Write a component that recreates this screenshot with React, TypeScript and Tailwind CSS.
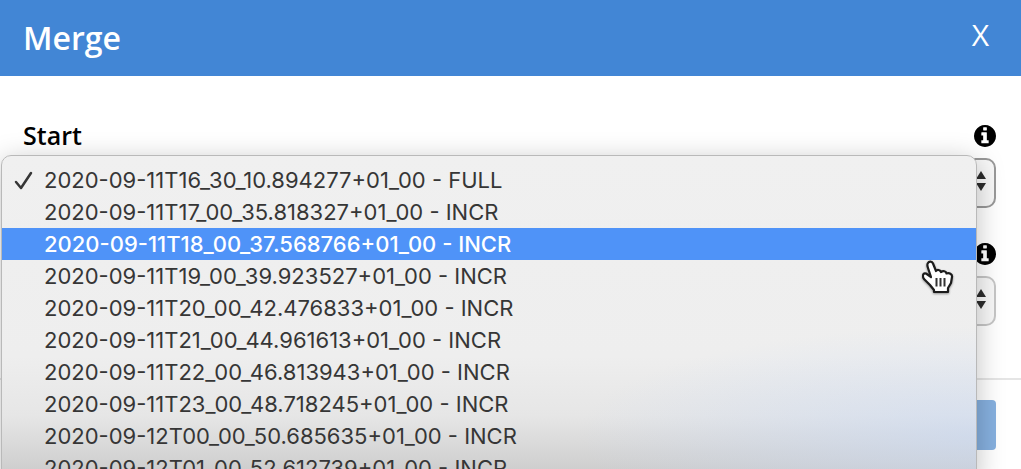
import { useState } from "react";

const backups = [
  "2020-09-11T16_30_10.894277+01_00 - FULL",
  "2020-09-11T17_00_35.818327+01_00 - INCR",
  "2020-09-11T18_00_37.568766+01_00 - INCR",
  "2020-09-11T19_00_39.923527+01_00 - INCR",
  "2020-09-11T20_00_42.476833+01_00 - INCR",
  "2020-09-11T21_00_44.961613+01_00 - INCR",
  "2020-09-11T22_00_46.813943+01_00 - INCR",
  "2020-09-11T23_00_48.718245+01_00 - INCR",
  "2020-09-12T00_00_50.685635+01_00 - INCR",
  "2020-09-12T01_00_52.612739+01_00 - INCR",
];

function SelectBox({ id, border }: { id: string; border: string }) {
  return (
    <div className="relative">
      <select
        id={id}
        aria-label={id}
        className={`block h-[50px] w-full appearance-none rounded-[10px] border-2 bg-[#f8f8f8] text-transparent ${border}`}
      >
        {backups.map((b) => (
          <option key={b}>{b}</option>
        ))}
      </select>
      <svg
        className="pointer-events-none absolute top-[13px] right-[10px] h-5 w-[10px]"
        viewBox="0 0 10 20"
        fill="#2c2c2c"
      >
        <path d="M5 0 10 8H0ZM5 20 0 12H10Z" />
      </svg>
    </div>
  );
}

function InfoButton() {
  return (
    <button type="button" aria-label="Information" className="text-black">
      <svg className="h-[22px] w-[22px]" viewBox="128 128 1536 1536" fill="currentColor">
        <path d="M1152 1376v-160q0-14-9-23t-23-9h-96v-512q0-14-9-23t-23-9h-320q-14 0-23 9t-9 23v160q0 14 9 23t23 9h96v320h-96q-14 0-23 9t-9 23v160q0 14 9 23t23 9h448q14 0 23-9t9-23zm-128-896v-160q0-14-9-23t-23-9h-192q-14 0-23 9t-9 23v160q0 14 9 23t23 9h192q14 0 23-9t9-23zm640 416q0 209-103 385.5t-279.5 279.5-385.5 103-385.5-103-279.5-279.5-103-385.5 103-385.5 279.5-279.5 385.5-103 385.5 103 279.5 279.5 103 385.5z" />
      </svg>
    </button>
  );
}

function HandCursor() {
  return (
    <svg
      className="pointer-events-none absolute top-[104px] right-[22px] h-[34px] w-8 drop-shadow-[0_1px_1px_rgba(0,0,0,0.4)]"
      viewBox="0 0 32 34"
    >
      <path
        d="M6 3C7 1 10 1 11 3.500L14 11C15 9.500 18 9.500 19 12C21 10.500 24 11 24.500 13.500C27 12.500 30.500 14 30 17L29 23L26 28V32H12V30L8 25L2 19C0 16 1 12.500 4 13.500L9 17L6 8C5 5 5 4 6 3Z"
        fill="#fff"
        stroke="#1c1c1c"
        strokeWidth="2.200"
        strokeLinejoin="round"
      />
      <path d="M14.500 18V26.500M18.500 18V26.500M22.500 18V26.500" stroke="#333" strokeWidth="2" />
    </svg>
  );
}

function BackupMenu() {
  const [active, setActive] = useState(2);
  return (
    <div
      role="listbox"
      aria-label="Start"
      className="absolute -top-[3px] right-[19px] -left-[22px] z-10 rounded-[10px] border border-[#b9b9b9] bg-[linear-gradient(to_bottom,#f0f0f0_0px,#eeeeee_200px,#e6e6e6_260px,#cecece_314px)] pt-2 shadow-[0_6px_28px_rgba(0,0,0,0.25)]"
    >
      <div className="pointer-events-none absolute inset-0 bg-[radial-gradient(ellipse_400px_110px_at_100%_280px,rgba(195,215,248,0.5),transparent)]" />
      {backups.map((b, i) => (
        <button
          key={b}
          type="button"
          role="option"
          aria-selected={i === 0}
          onMouseEnter={() => setActive(i)}
          className={`relative flex h-8 w-full items-center pl-3 text-left font-['Inter',sans-serif] text-[22px] whitespace-nowrap ${
            i === active ? "bg-[#4f93f8] font-medium text-white" : "text-[#363636]"
          }`}
        >
          <span className="w-[30px]">
            {i === 0 && (
              <svg className="h-5 w-5" viewBox="0 0 20 20" fill="none" stroke="#363636" strokeWidth="2.500">
                <path d="m2 12 5 6L17 3" strokeLinecap="round" strokeLinejoin="round" />
              </svg>
            )}
          </span>
          {b}
        </button>
      ))}
      <HandCursor />
    </div>
  );
}

export default function App() {
  return (
    <div className="h-screen overflow-hidden bg-white font-['Open_Sans','Noto_Sans',sans-serif] text-black">
      <header className="flex h-[76px] items-center justify-between bg-[#4286d5] pr-8 pl-[23px] text-white">
        <h1 className="text-[32px] font-semibold">Merge</h1>
        <button type="button" aria-label="Close" className="pb-2 text-[30px] font-normal">
          X
        </button>
      </header>
      <form>
        <div className="flex flex-col gap-[30px] pt-11 pr-[25px] pb-[52px] pl-[23px]">
          <div>
            <div className="mb-[6px] flex h-8 items-center justify-between">
              <label htmlFor="start" className="text-[25px] font-semibold">
                Start
              </label>
              <InfoButton />
            </div>
            <div className="relative">
              <SelectBox id="start" border="border-[#999999]" />
              <BackupMenu />
            </div>
          </div>
          <div>
            <div className="mb-[6px] flex h-8 items-center justify-end">
              <InfoButton />
            </div>
            <SelectBox id="end" border="border-[#c6c6c6]" />
          </div>
        </div>
        <footer className="flex justify-end border-t-2 border-[#e5e5e5] pt-5 pr-[25px]">
          <button type="submit" aria-label="Merge" className="h-[50px] w-32 rounded bg-[#86b0df]" />
        </footer>
      </form>
    </div>
  );
}
